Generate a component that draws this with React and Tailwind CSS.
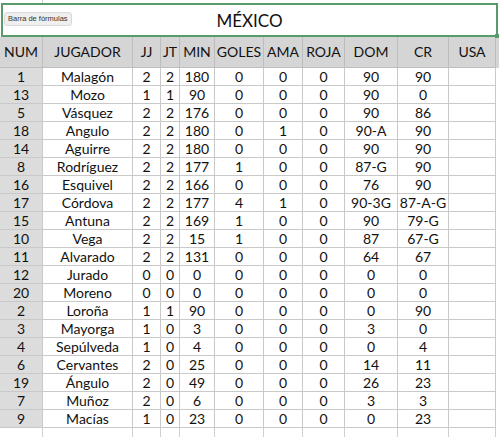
import React from "react";

const rows = [
  ["1", "Malagón", "2", "2", "180", "0", "0", "0", "90", "90"],
  ["13", "Mozo", "1", "1", "90", "0", "0", "0", "90", "0"],
  ["5", "Vásquez", "2", "2", "176", "0", "0", "0", "90", "86"],
  ["18", "Angulo", "2", "2", "180", "0", "1", "0", "90-A", "90"],
  ["14", "Aguirre", "2", "2", "180", "0", "0", "0", "90", "90"],
  ["8", "Rodríguez", "2", "2", "177", "1", "0", "0", "87-G", "90"],
  ["16", "Esquivel", "2", "2", "166", "0", "0", "0", "76", "90"],
  ["17", "Córdova", "2", "2", "177", "4", "1", "0", "90-3G", "87-A-G"],
  ["15", "Antuna", "2", "2", "169", "1", "0", "0", "90", "79-G"],
  ["10", "Vega", "2", "2", "15", "1", "0", "0", "87", "67-G"],
  ["11", "Alvarado", "2", "2", "131", "0", "0", "0", "64", "67"],
  ["12", "Jurado", "0", "0", "0", "0", "0", "0", "0", "0"],
  ["20", "Moreno", "0", "0", "0", "0", "0", "0", "0", "0"],
  ["2", "Loroña", "1", "1", "90", "0", "0", "0", "0", "90"],
  ["3", "Mayorga", "1", "0", "3", "0", "0", "0", "3", "0"],
  ["4", "Sepúlveda", "1", "0", "4", "0", "0", "0", "0", "4"],
  ["6", "Cervantes", "2", "0", "25", "0", "0", "0", "14", "11"],
  ["19", "Ángulo", "2", "0", "49", "0", "0", "0", "26", "23"],
  ["7", "Muñoz", "2", "0", "6", "0", "0", "0", "3", "3"],
  ["9", "Macías", "1", "0", "23", "0", "0", "0", "0", "23"],
];

const headers = ["NUM", "JUGADOR", "JJ", "JT", "MIN", "GOLES", "AMA", "ROJA", "DOM", "CR", "USA"];

const cols = "grid grid-cols-[43px_90px_28px_19px_35px_49px_39px_42px_53px_51px_47px]";

export default function App() {
  return (
    <div
      className="w-[499px] h-[437px] bg-white overflow-hidden text-[#111]"
      style={{ fontFamily: "Lato, 'Liberation Sans', sans-serif" }}
    >
      <div className="h-[3px] w-[496px] flex">
        <div className="w-[43px] h-full border-r border-[#d0d0d0]" />
      </div>
      <div className="relative ml-[1px] w-[497px] h-[34px] border-2 border-[#579a6c] flex items-center justify-center">
        <span className="text-[17px] leading-none">MÉXICO</span>
        <div
          className="absolute left-[1px] top-[7px] h-[14px] px-[3px] whitespace-nowrap bg-[#efefef] border border-[#d9d9d9] rounded-[3px] flex items-center text-[7.5px] leading-none text-[#333]"
          style={{ fontFamily: "'Liberation Sans', Arial, sans-serif" }}
        >
          Barra de fórmulas
        </div>
        <div className="absolute right-[-3px] bottom-[-3px] w-[4px] h-[4px] bg-[#579a6c]" />
      </div>
      <div className={cols + " h-[31px] bg-[#d5d5d5]"}>
        {headers.map((h) => (
          <div
            key={h}
            className="flex items-center justify-center border-r border-b border-[#bdbdbd] text-[14px] leading-none"
          >
            {h}
          </div>
        ))}
      </div>
      {rows.map((r, i) => (
        <div key={i} className={cols + " h-[18px]"}>
          {[...r, ""].map((c, j) => (
            <div
              key={j}
              className={
                "flex items-center justify-center border-r border-b border-[#c9c9c9] text-[14px] leading-none " +
                (j === 0 ? "bg-[#dcdcdc]" : "bg-white")
              }
            >
              {c}
            </div>
          ))}
        </div>
      ))}
      <div className={cols + " h-[18px]"}>
        {headers.map((h) => (
          <div key={h} className="border-r border-[#d0d0d0]" />
        ))}
      </div>
    </div>
  );
}
